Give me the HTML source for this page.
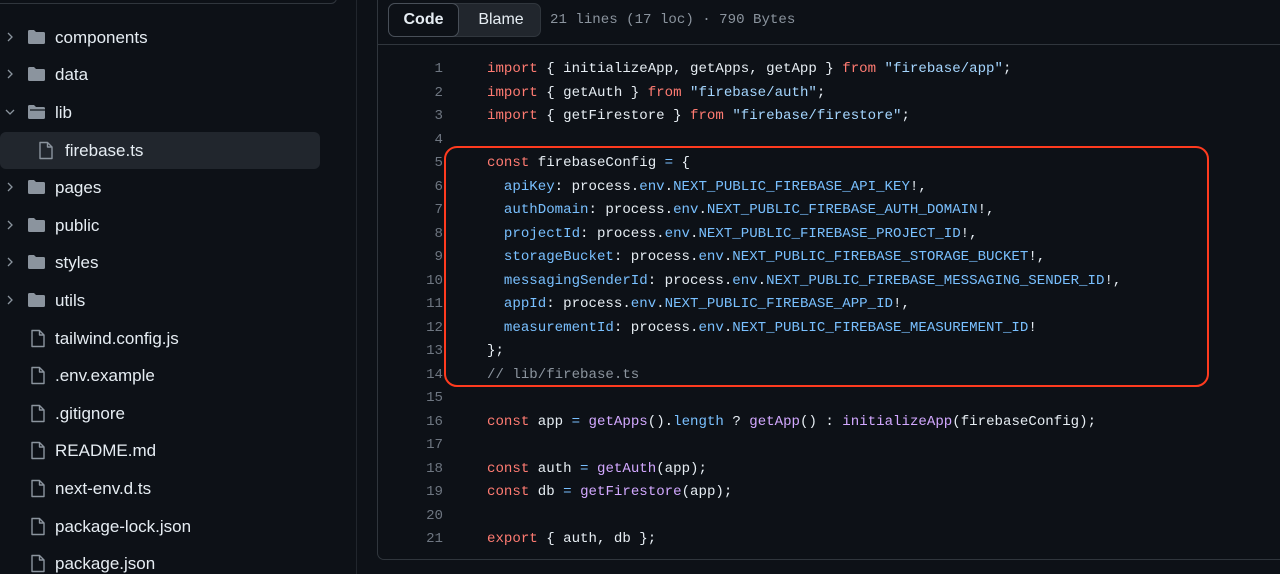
<!DOCTYPE html>
<html><head><meta charset="utf-8"><style>
*{margin:0;padding:0;box-sizing:border-box}
html{overflow:hidden;background:#0d1117}
body{width:1280px;height:574px;background:#0d1117;overflow:hidden;position:relative;font-family:"Liberation Sans",sans-serif;color:#e6edf3}
.search{position:absolute;left:-10px;top:-30px;width:347px;height:34px;border:1px solid #30363d;border-radius:6px}
.vdiv{position:absolute;left:356px;top:0;width:1px;height:574px;background:#21262d}
.row{position:absolute;left:0;height:37px;width:320px;font-size:17px}
.row.sel{background:#21262d;border-radius:6px}
.chev{position:absolute;left:4px;top:12px}
.ico{position:absolute;left:27px;top:10px}
.fico{position:absolute;left:30px;top:9px}
.row span{position:absolute;left:55px;top:9px;line-height:20px}
.panel{position:absolute;left:377px;top:-10px;width:920px;height:570px;border:1px solid #30363d;border-radius:7px}
.tb{position:absolute;left:378px;top:0;width:902px;height:45px;border-bottom:1px solid #30363d;background:#0d1117}
.seg{position:absolute;left:388px;top:3px;width:153px;height:34px;background:#21262d;border:1px solid #30363d;border-radius:7px}
.code-b{position:absolute;left:388px;top:3px;width:71px;height:34px;background:#0d1117;border:1px solid #484f58;border-radius:7px;font-weight:bold;font-size:16px;text-align:center;line-height:32px}
.blame{position:absolute;left:462px;top:3px;width:78px;height:34px;font-size:16px;text-align:center;line-height:34px}
.meta{position:absolute;left:550px;top:10px;font-family:"Liberation Mono",monospace;font-size:14.1px;color:#8b949e;line-height:20px}
.ln,.src{position:absolute;top:58px;font-family:"Liberation Mono",monospace;font-size:14.1px;line-height:23.5px;white-space:pre}
.ln{left:400px;width:43px;text-align:right;color:#6e7681}
.src{left:487px}
.k{color:#ff7b72}.s{color:#a5d6ff}.p{color:#79c0ff}.f{color:#d2a8ff}.c{color:#8b949e}
.box{position:absolute;left:444px;top:146px;width:765px;height:241px;border:2px solid #ff3b1f;border-radius:13px}
</style></head><body>
<div class="search"></div>
<div class="vdiv"></div>

<div class="row" style="top:19px"><svg class="chev" width="12" height="12" viewBox="0 0 12 12"><path d="M4 2l4 4-4 4" fill="none" stroke="#8b949e" stroke-width="1.3"/></svg><svg class="ico" width="19" height="16" viewBox="0 0 19 16"><path d="M1 2.5Q1 1 2.5 1H7l2 2h7.5Q18 3 18 4.5v9q0 1.5-1.5 1.5h-14Q1 15 1 13.5z" fill="#8b949e"/></svg><span>components</span></div>
<div class="row" style="top:56px"><svg class="chev" width="12" height="12" viewBox="0 0 12 12"><path d="M4 2l4 4-4 4" fill="none" stroke="#8b949e" stroke-width="1.3"/></svg><svg class="ico" width="19" height="16" viewBox="0 0 19 16"><path d="M1 2.5Q1 1 2.5 1H7l2 2h7.5Q18 3 18 4.5v9q0 1.5-1.5 1.5h-14Q1 15 1 13.5z" fill="#8b949e"/></svg><span>data</span></div>
<div class="row" style="top:94px"><svg class="chev" width="12" height="12" viewBox="0 0 12 12"><path d="M2 4l4 4 4-4" fill="none" stroke="#8b949e" stroke-width="1.3"/></svg><svg class="ico" width="19" height="16" viewBox="0 0 19 16"><path d="M1 2.5Q1 1 2.5 1H7l2 2h7.5Q18 3 18 4.5v9q0 1.5-1.5 1.5h-14Q1 15 1 13.5z" fill="#8b949e"/><path d="M3 6h15" stroke="#0d1117" stroke-width="1.2"/></svg><span>lib</span></div>
<div class="row sel" style="top:132px"><svg class="fico" style="left:38px" width="16" height="19" viewBox="0 0 16 19"><path d="M2 1.5h7.5l4.5 4.5v11.5h-12z M9.5 1.5v4.5h4.5" fill="none" stroke="#8b949e" stroke-width="1.4" stroke-linejoin="round"/></svg><span style="left:65px">firebase.ts</span></div>
<div class="row" style="top:169px"><svg class="chev" width="12" height="12" viewBox="0 0 12 12"><path d="M4 2l4 4-4 4" fill="none" stroke="#8b949e" stroke-width="1.3"/></svg><svg class="ico" width="19" height="16" viewBox="0 0 19 16"><path d="M1 2.5Q1 1 2.5 1H7l2 2h7.5Q18 3 18 4.5v9q0 1.5-1.5 1.5h-14Q1 15 1 13.5z" fill="#8b949e"/></svg><span>pages</span></div>
<div class="row" style="top:207px"><svg class="chev" width="12" height="12" viewBox="0 0 12 12"><path d="M4 2l4 4-4 4" fill="none" stroke="#8b949e" stroke-width="1.3"/></svg><svg class="ico" width="19" height="16" viewBox="0 0 19 16"><path d="M1 2.5Q1 1 2.5 1H7l2 2h7.5Q18 3 18 4.5v9q0 1.5-1.5 1.5h-14Q1 15 1 13.5z" fill="#8b949e"/></svg><span>public</span></div>
<div class="row" style="top:244px"><svg class="chev" width="12" height="12" viewBox="0 0 12 12"><path d="M4 2l4 4-4 4" fill="none" stroke="#8b949e" stroke-width="1.3"/></svg><svg class="ico" width="19" height="16" viewBox="0 0 19 16"><path d="M1 2.5Q1 1 2.5 1H7l2 2h7.5Q18 3 18 4.5v9q0 1.5-1.5 1.5h-14Q1 15 1 13.5z" fill="#8b949e"/></svg><span>styles</span></div>
<div class="row" style="top:282px"><svg class="chev" width="12" height="12" viewBox="0 0 12 12"><path d="M4 2l4 4-4 4" fill="none" stroke="#8b949e" stroke-width="1.3"/></svg><svg class="ico" width="19" height="16" viewBox="0 0 19 16"><path d="M1 2.5Q1 1 2.5 1H7l2 2h7.5Q18 3 18 4.5v9q0 1.5-1.5 1.5h-14Q1 15 1 13.5z" fill="#8b949e"/></svg><span>utils</span></div>
<div class="row" style="top:320px"><svg class="fico" width="16" height="19" viewBox="0 0 16 19"><path d="M2 1.5h7.5l4.5 4.5v11.5h-12z M9.5 1.5v4.5h4.5" fill="none" stroke="#8b949e" stroke-width="1.4" stroke-linejoin="round"/></svg><span>tailwind.config.js</span></div>
<div class="row" style="top:357px"><svg class="fico" width="16" height="19" viewBox="0 0 16 19"><path d="M2 1.5h7.5l4.5 4.5v11.5h-12z M9.5 1.5v4.5h4.5" fill="none" stroke="#8b949e" stroke-width="1.4" stroke-linejoin="round"/></svg><span>.env.example</span></div>
<div class="row" style="top:395px"><svg class="fico" width="16" height="19" viewBox="0 0 16 19"><path d="M2 1.5h7.5l4.5 4.5v11.5h-12z M9.5 1.5v4.5h4.5" fill="none" stroke="#8b949e" stroke-width="1.4" stroke-linejoin="round"/></svg><span>.gitignore</span></div>
<div class="row" style="top:432px"><svg class="fico" width="16" height="19" viewBox="0 0 16 19"><path d="M2 1.5h7.5l4.5 4.5v11.5h-12z M9.5 1.5v4.5h4.5" fill="none" stroke="#8b949e" stroke-width="1.4" stroke-linejoin="round"/></svg><span>README.md</span></div>
<div class="row" style="top:470px"><svg class="fico" width="16" height="19" viewBox="0 0 16 19"><path d="M2 1.5h7.5l4.5 4.5v11.5h-12z M9.5 1.5v4.5h4.5" fill="none" stroke="#8b949e" stroke-width="1.4" stroke-linejoin="round"/></svg><span>next-env.d.ts</span></div>
<div class="row" style="top:508px"><svg class="fico" width="16" height="19" viewBox="0 0 16 19"><path d="M2 1.5h7.5l4.5 4.5v11.5h-12z M9.5 1.5v4.5h4.5" fill="none" stroke="#8b949e" stroke-width="1.4" stroke-linejoin="round"/></svg><span>package-lock.json</span></div>
<div class="row" style="top:545px"><svg class="fico" width="16" height="19" viewBox="0 0 16 19"><path d="M2 1.5h7.5l4.5 4.5v11.5h-12z M9.5 1.5v4.5h4.5" fill="none" stroke="#8b949e" stroke-width="1.4" stroke-linejoin="round"/></svg><span>package.json</span></div>

<div class="panel"></div>
<div class="tb"></div>
<div class="seg"></div>
<div class="code-b">Code</div>
<div class="blame">Blame</div>
<div class="meta">21 lines (17 loc) · 790 Bytes</div>

<div class="ln">1
2
3
4
5
6
7
8
9
10
11
12
13
14
15
16
17
18
19
20
21</div>
<div class="src"><span class="k">import</span> { initializeApp, getApps, getApp } <span class="k">from</span> <span class="s">"firebase/app"</span>;
<span class="k">import</span> { getAuth } <span class="k">from</span> <span class="s">"firebase/auth"</span>;
<span class="k">import</span> { getFirestore } <span class="k">from</span> <span class="s">"firebase/firestore"</span>;

<span class="k">const</span> firebaseConfig <span class="p">=</span> {
  <span class="p">apiKey</span>: process.<span class="p">env</span>.<span class="p">NEXT_PUBLIC_FIREBASE_API_KEY</span>!,
  <span class="p">authDomain</span>: process.<span class="p">env</span>.<span class="p">NEXT_PUBLIC_FIREBASE_AUTH_DOMAIN</span>!,
  <span class="p">projectId</span>: process.<span class="p">env</span>.<span class="p">NEXT_PUBLIC_FIREBASE_PROJECT_ID</span>!,
  <span class="p">storageBucket</span>: process.<span class="p">env</span>.<span class="p">NEXT_PUBLIC_FIREBASE_STORAGE_BUCKET</span>!,
  <span class="p">messagingSenderId</span>: process.<span class="p">env</span>.<span class="p">NEXT_PUBLIC_FIREBASE_MESSAGING_SENDER_ID</span>!,
  <span class="p">appId</span>: process.<span class="p">env</span>.<span class="p">NEXT_PUBLIC_FIREBASE_APP_ID</span>!,
  <span class="p">measurementId</span>: process.<span class="p">env</span>.<span class="p">NEXT_PUBLIC_FIREBASE_MEASUREMENT_ID</span>!
};
<span class="c">// lib/firebase.ts</span>

<span class="k">const</span> app <span class="p">=</span> <span class="f">getApps</span>().<span class="p">length</span> ? <span class="f">getApp</span>() : <span class="f">initializeApp</span>(firebaseConfig);

<span class="k">const</span> auth <span class="p">=</span> <span class="f">getAuth</span>(app);
<span class="k">const</span> db <span class="p">=</span> <span class="f">getFirestore</span>(app);

<span class="k">export</span> { auth, db };</div>
<div class="box"></div>
</body></html>
